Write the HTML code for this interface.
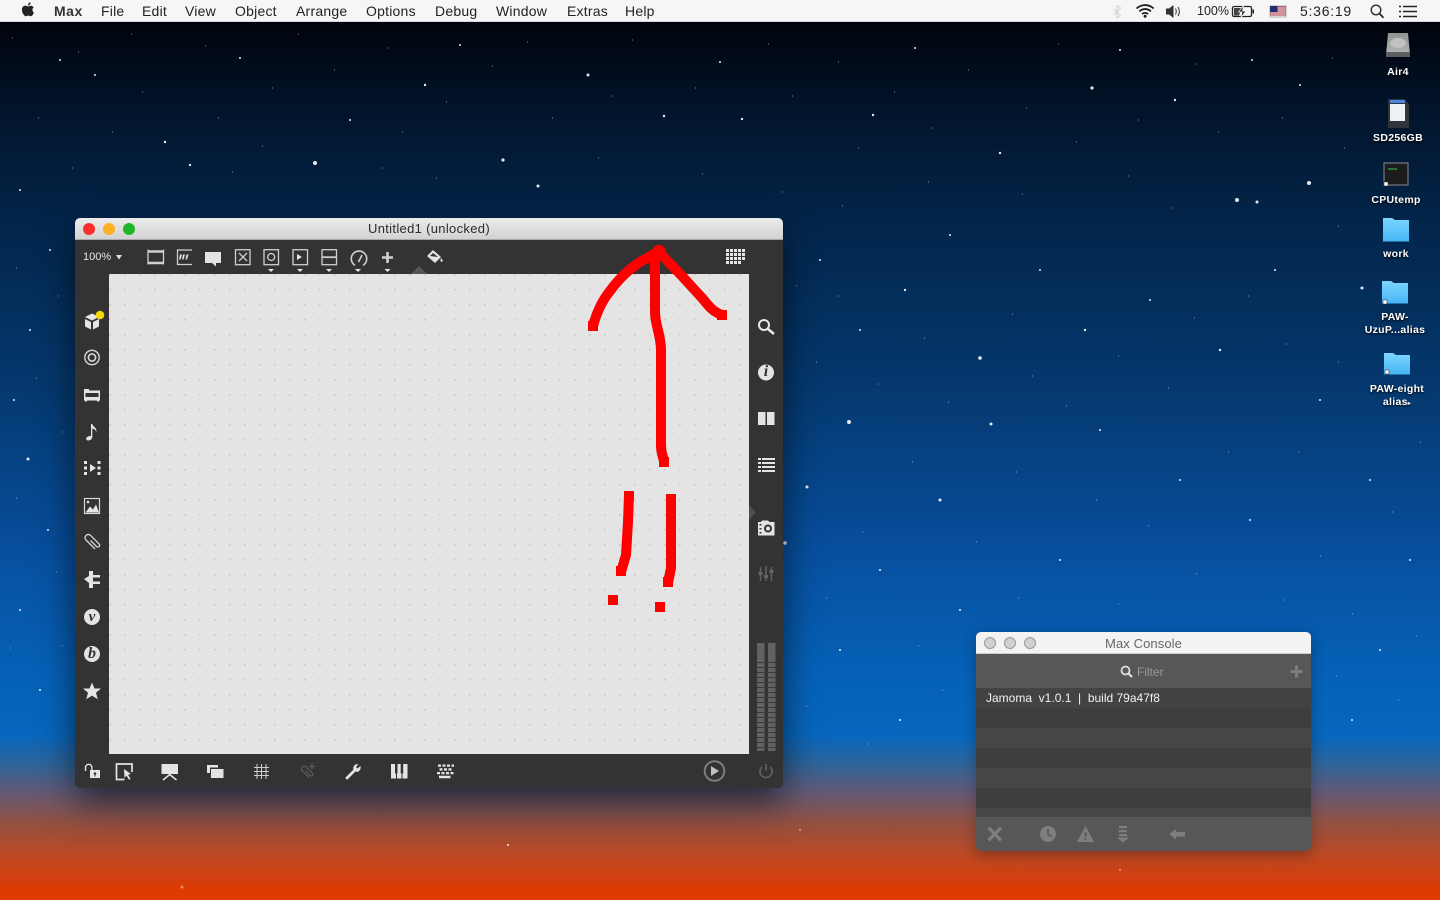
<!DOCTYPE html>
<html>
<head>
<meta charset="utf-8">
<title>Max</title>
<style>
html,body{margin:0;padding:0;width:1440px;height:900px;overflow:hidden}
body{position:relative;font-family:"Liberation Sans",sans-serif;background:linear-gradient(180deg,#01040c 22px,#021228 100px,#03254a 220px,#053a72 400px,#0750a0 560px,#0662b8 680px,#0766bd 735px,#2f6498 765px,#5f5a78 790px,#96503f 825px,#c34720 860px,#de3a02 892px,#de3a02 900px)}
div{position:absolute;box-sizing:border-box}
svg{position:absolute;left:0;top:0}
.m{top:3px;font-size:14px;line-height:16px;color:#222;white-space:nowrap;letter-spacing:.22px}
.d{color:#fff;font-weight:bold;font-size:10.5px;line-height:13px;text-align:center;width:80px;letter-spacing:.3px;text-shadow:0 1px 2px #000}
</style>
</head>
<body>
<svg width="1440" height="900" fill="#fff">
<g opacity=".9">
<circle cx="315" cy="163" r="2"/><circle cx="503" cy="160" r="1.600"/><circle cx="538" cy="186" r="1.500"/><circle cx="1092" cy="88" r="1.600"/><circle cx="1309" cy="183" r="2"/><circle cx="1237" cy="200" r="2"/><circle cx="1257" cy="202" r="1.500"/><circle cx="1362" cy="288" r="1.500"/><circle cx="980" cy="358" r="1.800"/><circle cx="849" cy="422" r="2"/><circle cx="991" cy="424" r="1.500"/><circle cx="807" cy="487" r="1.500"/><circle cx="940" cy="500" r="1.500"/><circle cx="785" cy="543" r="1.800"/><circle cx="28" cy="459" r="1.500"/><circle cx="190" cy="165" r="1.200"/><circle cx="165" cy="142" r="1.200"/><circle cx="350" cy="120" r="1"/><circle cx="425" cy="85" r="1.200"/><circle cx="588" cy="75" r="1.500"/><circle cx="664" cy="116" r="1.200"/><circle cx="742" cy="119" r="1.200"/><circle cx="873" cy="115" r="1.200"/><circle cx="1000" cy="153" r="1.200"/><circle cx="1175" cy="100" r="1.200"/><circle cx="1300" cy="85" r="1"/><circle cx="95" cy="75" r="1"/><circle cx="60" cy="60" r="1"/><circle cx="240" cy="58" r="1"/><circle cx="460" cy="45" r="1"/><circle cx="720" cy="62" r="1"/><circle cx="915" cy="48" r="1"/><circle cx="1120" cy="50" r="1"/><circle cx="1252" cy="60" r="1"/><circle cx="20" cy="190" r="1"/><circle cx="50" cy="250" r="1"/><circle cx="30" cy="330" r="1"/><circle cx="14" cy="400" r="1"/><circle cx="48" cy="530" r="1"/><circle cx="20" cy="610" r="1"/><circle cx="40" cy="690" r="1"/><circle cx="820" cy="260" r="1"/><circle cx="860" cy="330" r="1"/><circle cx="905" cy="290" r="1.200"/><circle cx="950" cy="235" r="1"/><circle cx="1040" cy="270" r="1"/><circle cx="1085" cy="330" r="1.200"/><circle cx="1150" cy="300" r="1"/><circle cx="1220" cy="350" r="1.200"/><circle cx="1275" cy="270" r="1"/><circle cx="1320" cy="400" r="1"/><circle cx="1100" cy="430" r="1"/><circle cx="1180" cy="480" r="1"/><circle cx="1250" cy="520" r="1"/><circle cx="1370" cy="480" r="1"/><circle cx="1410" cy="560" r="1"/><circle cx="880" cy="570" r="1"/><circle cx="960" cy="610" r="1"/><circle cx="1060" cy="560" r="1"/><circle cx="840" cy="650" r="1"/><circle cx="1380" cy="650" r="1"/><circle cx="900" cy="720" r="1"/><circle cx="1352" cy="720" r="1"/><circle cx="508" cy="845" r="1"/><circle cx="182" cy="887" r="1.500" fill="#f09070"/><circle cx="1120" cy="870" r="1" opacity=".5"/><circle cx="800" cy="830" r="1" opacity=".5"/>
</g>
<path opacity=".5" stroke="#fff" stroke-width="1" fill="none" d="M12 38h1M78 52h1M131 34h1M142 92h1M205 46h1M218 118h1M272 88h1M298 34h1M334 70h1M388 48h1M402 132h1M446 102h1M492 66h1M527 42h1M552 118h1M612 96h1M632 40h1M695 88h1M768 44h1M792 96h1M838 62h1M858 148h1M894 92h1M932 128h1M968 70h1M1026 108h1M1058 44h1M1076 142h1M1138 120h1M1196 64h1M1218 132h1M1282 118h1M1332 58h1M1344 148h1M38 118h1M72 168h1M112 132h1M232 172h1M262 146h1M382 168h1M436 178h1M598 158h1M702 174h1M782 192h1M842 206h1M928 182h1M1022 194h1M1128 176h1M1172 208h1M1338 226h1M16 268h1M58 296h1M36 378h1M62 432h1M16 498h1M56 572h1M10 648h1M62 646h1M796 286h1M838 296h1M816 362h1M878 384h1M924 338h1M948 402h1M1012 314h1M1032 376h1M1066 406h1M1118 356h1M1168 388h1M1194 318h1M1248 296h1M1286 344h1M1298 452h1M1338 362h1M1420 442h1M1392 512h1M1320 556h1M1228 452h1M1148 526h1M1096 500h1M1016 472h1M976 542h1M912 462h1M862 532h1M826 598h1M918 646h1M1018 598h1M1118 604h1M1196 574h1M1284 600h1M1352 614h1M1416 636h1M806 706h1M868 744h1M942 690h1M1336 676h1M1398 700h1"/>
</svg>

<!-- Menu bar -->
<div style="left:0;top:0;width:1440px;height:22px;background:#f6f6f6;border-bottom:1px solid #d8d8d8"></div>
<svg width="1440" height="22" style="z-index:2">
<path d="M31 5.600c-1.200 0-1.700.7-2.800.7-1 0-1.700-.7-2.800-.7-1.800 0-3.500 1.400-3.500 4 0 3 2.200 6.600 3.900 6.600.9 0 1.300-.6 2.500-.6s1.500.6 2.500.6c1.300 0 2.500-2 3.200-3.700-1.600-.7-2.400-3.500-.4-5-.7-1.200-1.800-1.900-2.600-1.900zM28.100 5.400c1.500 0 2.600-1.500 2.400-3-1.300.1-2.700 1.300-2.400 3z" fill="#222"/>
<path d="M1117 5l3.500 3-3.500 3.600V18M1117 5v13l3.500-3-7-5.600M1117 12l-3.500 3" fill="none" stroke="#d0d0d0" stroke-width="1"/>
<g fill="none" stroke="#1e1e1e" stroke-width="1.800"><path d="M1136.500 8.500c5.200-4.600 12-4.600 17.200 0"/><path d="M1139.300 11.300c3.500-3 8.100-3 11.600 0"/><path d="M1142 14c1.800-1.500 4.400-1.500 6.200 0"/></g><circle cx="1145.100" cy="16.300" r="1.500" fill="#1e1e1e"/>
<path d="M1166 8.500h3l4.500-3.500v13L1169 14.500h-3z" fill="#333"/><path d="M1175.500 8.500c1 1.700 1 4.300 0 6M1178 7c1.700 2.800 1.700 6.200 0 9" fill="none" stroke="#333" stroke-width="1"/>
<rect x="1232.500" y="6.500" width="19" height="10" rx="1.500" fill="none" stroke="#222" stroke-width="1.300"/><rect x="1252.500" y="9.500" width="1.500" height="4" fill="#222"/><path d="M1234 8h8l-3 7.500h-5z" fill="#444"/><path d="M1243.500 5.500l-5 6.500h3.500l-1 5.500 5-6.500h-3.500z" fill="#222" stroke="#f6f6f6" stroke-width=".7"/>
<rect x="1270" y="6" width="16" height="11" fill="#fff" stroke="#666" stroke-width=".5"/><path d="M1270 7h16M1270 9h16M1270 11h16M1270 13h16M1270 15h16" stroke="#a62633" stroke-width="1"/><rect x="1270" y="6" width="7.500" height="6" fill="#1f2c70"/>
<circle cx="1376" cy="10" r="4.800" fill="none" stroke="#2a2a2a" stroke-width="1.400"/><path d="M1379.500 13.500l4 4.200" stroke="#2a2a2a" stroke-width="1.800"/>
<path d="M1403 6.500h14M1403 11.500h14M1403 16.500h14" stroke="#222" stroke-width="1.400"/><path d="M1399 6.500h2M1399 11.500h2M1399 16.500h2" stroke="#222" stroke-width="1.600"/>
</svg>
<div class="m" style="left:54px;font-weight:bold;color:#333;letter-spacing:.5px">Max</div>
<div class="m" style="left:101px">File</div>
<div class="m" style="left:142px">Edit</div>
<div class="m" style="left:185px">View</div>
<div class="m" style="left:235px">Object</div>
<div class="m" style="left:296px">Arrange</div>
<div class="m" style="left:366px">Options</div>
<div class="m" style="left:435px">Debug</div>
<div class="m" style="left:496px">Window</div>
<div class="m" style="left:567px">Extras</div>
<div class="m" style="left:625px">Help</div>
<div class="m" style="left:1197px;font-size:12.500px;top:3px;letter-spacing:0">100%</div>
<div class="m" style="left:1300px;letter-spacing:.75px">5:36:19</div>

<!-- Desktop icons -->
<svg width="1440" height="420">
<defs><linearGradient id="fo" x1="0" y1="0" x2="0" y2="1"><stop offset="0" stop-color="#7cd5ff"/><stop offset="1" stop-color="#46b6f4"/></linearGradient><linearGradient id="hd" x1="0" y1="0" x2="0" y2="1"><stop offset="0" stop-color="#8f9392"/><stop offset="1" stop-color="#b4b7b6"/></linearGradient></defs>
<path d="M1388 33h20l2 22h-24z" fill="url(#hd)"/><rect x="1386" y="52" width="24" height="5" fill="#5a5e60"/><ellipse cx="1398" cy="43" rx="8" ry="5" fill="#bfc2c1"/>
<path d="M1388 99h16l5 5v24h-21z" fill="#30353b"/><rect x="1390" y="100" width="15" height="3" fill="#4a88e0"/><rect x="1390" y="104" width="15" height="17" fill="#eef1f4"/>
<rect x="1384" y="163" width="24" height="22" fill="#1c1c1c" stroke="#8a8d90"/><path d="M1388 169h9" stroke="#3cc45a" stroke-width="1"/>
<path d="M1383 224v-6h9l3 2h14v21.500h-26z" fill="url(#fo)"/>
<path d="M1382 288v-7h9l3 2h14v20.500h-26z" fill="url(#fo)"/>
<path d="M1384 360v-7h9l3 2h14v19.500h-26z" fill="url(#fo)"/>
<g fill="#fff" stroke="#222" stroke-width=".5"><rect x="1384" y="182" width="4" height="4"/><rect x="1383" y="300" width="4" height="4"/><rect x="1385" y="370" width="4" height="4"/></g>
</svg>
<div class="d" style="left:1358px;top:66px">Air4</div>
<div class="d" style="left:1358px;top:132px">SD256GB</div>
<div class="d" style="left:1356px;top:194px">CPUtemp</div>
<div class="d" style="left:1356px;top:248px">work</div>
<div class="d" style="left:1355px;top:311px">PAW-<br>UzuP...alias</div>
<div class="d" style="left:1357px;top:383px">PAW-eight<br>alias<span style="font-size:6px">▸</span></div>

<!-- Main window -->
<div style="left:75px;top:218px;width:708px;height:570px;background:#333;border-radius:5px;box-shadow:0 14px 36px rgba(0,0,0,.6);overflow:hidden">
<div style="left:0;top:0;width:708px;height:22px;background:linear-gradient(#ececec,#d2d2d2);border-bottom:1px solid #a8a8a8;font-size:13px;line-height:22px;text-align:center;color:#2c2c2c;letter-spacing:.32px">Untitled1 (unlocked)</div>
<div style="left:8px;top:32px;color:#e6e6e6;font-size:11px;line-height:14px">100%</div>
</div>
<div style="left:109px;top:274px;width:640px;height:480px;background-color:#e4e4e4;background-image:radial-gradient(circle at .75px .75px,#c6c6c6 .8px,transparent 1.100px);background-size:15px 15px;background-position:0 0"></div>

<svg width="1440" height="900" fill="#e4e4e4" stroke="none" style="filter:blur(.25px)">
<!-- traffic lights -->
<circle cx="89" cy="229" r="6" fill="#fc2e2e"/><circle cx="109" cy="229" r="6" fill="#fdb022"/><circle cx="129" cy="229" r="6" fill="#1fb52a"/>
<!-- top toolbar -->
<path d="M116 255h6l-3 4.500z"/>
<g fill="none" stroke="#d0d0d0" stroke-width="1.300">
<path d="M148 249.500v15M163.500 249.500v15"/><path d="M148 251.500h15.500M148 263h15.500" stroke-width="2.600"/>
<path d="M192 250h-14.500v14.500H192"/>
<rect x="235.500" y="249.700" width="14.500" height="15"/><path d="M239 253l8 8M247 253l-8 8"/>
<rect x="264" y="249.700" width="14.500" height="15"/><circle cx="271.200" cy="257" r="3.500"/>
<rect x="293" y="249.700" width="14.500" height="15"/>
<rect x="322" y="249.700" width="14.500" height="15"/><path d="M322 257.200h14.500" stroke-width="1.800"/>
<path d="M355 265.300a7.700 7.700 0 1 1 8 0" stroke-width="1.600"/><path d="M358.500 262l3.500-7" stroke-width="1.600"/>
<path d="M387.500 252v11M382 257.500h11" stroke-width="2.600"/>
</g>
<path d="M183 254.500h2l-1.500 5h-1.500zM186.500 254.500h2l-1.500 5h-1.500zM180 254.500h2l-1.500 5H179z"/>
<path d="M205 252h16v11h-5v3.500l-4-3.500h-7z"/>
<path d="M297 254l5 3-5 3z"/>
<path d="M268 269h6l-3 3zM297 269h6l-3 3zM326 269h6l-3 3zM355 269h6l-3 3zM384.500 269h6l-3 3z"/>
<path d="M433 250l8 7-6 6-8-7zM441 258c1.500 1.500 2.200 3 1 4-1.500 0-2-1.500-1-4z"/><path d="M430 256l3-3 5 4z" fill="#333"/>
<path d="M411 274l8-8 8 8z" fill="#555"/>
<path d="M726 249h3v3h-3zM730 249h3v3h-3zM734 249h3v3h-3zM738 249h3v3h-3zM742 249h3v3h-3zM726 253h3v3h-3zM730 253h3v3h-3zM734 253h3v3h-3zM738 253h3v3h-3zM742 253h3v3h-3zM726 257h3v3h-3zM730 257h3v3h-3zM734 257h3v3h-3zM738 257h3v3h-3zM742 257h3v3h-3zM726 261h3v3h-3zM730 261h3v3h-3zM734 261h3v3h-3zM738 261h3v3h-3z"/>

<!-- left toolbar -->
<path d="M85 317l7-3.500 7 3.500-7 3.500zM85 319l6 3v7.500l-6-3zM99 319l-6 3v7.500l6-3z"/><circle cx="100" cy="315" r="4.300" fill="#f5d90a"/>
<circle cx="92" cy="357.500" r="7.200" fill="none" stroke="#d6d6d6" stroke-width="1.400"/><circle cx="92" cy="357.500" r="3.600" fill="none" stroke="#d6d6d6" stroke-width="1.600"/>
<path d="M84 389h5v1.500h11v10h-1v1h-2v-1H87v1h-2v-1h-1z"/><rect x="85.500" y="393" width="13" height="4" fill="#333"/>
<path d="M91 424h1.300c.5 3 5 3.500 4 8-.8-2.200-2-3-4-3.500V437c0 2-2 3.500-4 3.500s-2.500-1.500-2-2.500c.7-1.500 3-2.500 4.700-1.800z"/>
<path d="M84 461h3v3h-3zM84 466.500h3v3h-3zM84 472h3v3h-3zM97.500 461h3v3h-3zM97.500 466.500h3v3h-3zM97.500 472h3v3h-3zM90 464l6 4-6 4z"/>
<rect x="84.500" y="498.500" width="15" height="15" fill="none" stroke="#d6d6d6" stroke-width="1.200"/><path d="M85.500 512.500l4.500-6 3 3 3-5 3 8z"/><circle cx="88" cy="502" r="1.300"/>
<path d="M91 541.500l6 6a1.800 1.800 0 0 0 2.600-2.600l-8.500-8.500a3.200 3.200 0 0 0-4.600 4.600l9 9" fill="none" stroke="#d6d6d6" stroke-width="1.300" transform="translate(-.5 -1)"/>
<path d="M84 579l5-3v-5h4v4h7v2.500h-7v4h7v2.500h-7v4h-4v-5z"/>
<circle cx="92" cy="617" r="8"/><circle cx="92" cy="654" r="8"/>
<path d="M92 682.500l2.500 6h6.500l-5 4.200 1.800 6.600-5.800-3.700-5.800 3.700 1.800-6.600-5-4.200h6.500z"/>

<!-- right toolbar -->
<circle cx="764" cy="325" r="5" fill="none" stroke="#e8e8e8" stroke-width="2"/><path d="M768 329l6 5" stroke="#e8e8e8" stroke-width="2.600"/>
<circle cx="766" cy="372.500" r="8"/>
<path d="M758 412h7.500v13H758zM767 412h7.500v13H767z"/>
<path d="M758 458h3v2h-3zM762 458h13v2h-13zM758 462h3v2h-3zM762 462h13v2h-13zM758 466h3v2h-3zM762 466h13v2h-13zM758 470h3v2h-3zM762 470h13v2h-13z"/>
<path d="M758 522h3l1-1.500h6l1.500 1.500h5v13.500h-16.500z"/><circle cx="768" cy="528.500" r="4" fill="#333"/><circle cx="768" cy="528.500" r="2" fill="#e4e4e4"/><path d="M759.500 524h2v1.500h-2zM759.500 528h2v1.500h-2zM759.500 532h2v1.500h-2z" fill="#333"/>
<g stroke="#646464" stroke-width="1.400"><path d="M760.500 567v14M766 566v15M771.500 567v14"/></g><path d="M758.500 572h4v3h-4zM764 575h4v3h-4zM769.500 570h4v3h-4z" fill="#646464"/>
<path d="M749 505l7 7.500-7 7.500z" fill="#4e4e4e"/>
<rect x="757" y="643" width="7.500" height="108" fill="#626262"/><rect x="768" y="643" width="7.500" height="108" fill="#626262"/>
<path d="M757 662.500h19M757 667.500h19M757 672.500h19M757 677.500h19M757 682.500h19M757 687.500h19M757 692.500h19M757 697.500h19M757 702.500h19M757 707.500h19M757 712.500h19M757 717.500h19M757 722.500h19M757 727.500h19M757 732.500h19M757 737.500h19M757 742.500h19M757 747.500h19" stroke="#3a3a3a" stroke-width="1"/>
<path d="M766 764v7" stroke="#5e5e5e" stroke-width="1.800"/><path d="M762 767a6 6 0 1 0 8 0" fill="none" stroke="#5e5e5e" stroke-width="1.800"/>

<!-- bottom toolbar -->
<path d="M85.500 771v-3.500a3.200 3.200 0 0 1 6.400 0v3" fill="none" stroke="#e4e4e4" stroke-width="1.400"/><rect x="90" y="770" width="10" height="8"/><circle cx="95" cy="773.500" r="1.300" fill="#333"/><rect x="94.500" y="774" width="1" height="2.500" fill="#333"/>
<path d="M132 772v-8h-15.500v15.500h8" fill="none" stroke="#e4e4e4" stroke-width="1.700"/><path d="M124 769l7 5-3 .8 2.500 4-1.500 1-2.500-4-2 2z"/>
<path d="M161.500 764h16.500v10h-16.500z"/><path d="M163 780l6.700-5.500 6.800 5.500" fill="none" stroke="#e4e4e4" stroke-width="1.600"/>
<path d="M207 765h11v2.500h-8V773h-3z"/><rect x="211" y="769" width="12.500" height="9"/>
<path d="M257 764v15M261.500 764v15M266 764v15M254 767.500h15M254 771.500h15M254 775.500h15" fill="none" stroke="#d0d0d0" stroke-width="1"/>
<path d="M305 770.500l5 5a1.600 1.600 0 0 0 2.300-2.300l-6.500-6.500a2.700 2.700 0 0 0-3.800 3.800l7 7" fill="none" stroke="#5e5e5e" stroke-width="1.200"/><path d="M312 763.500v6M309 766.500h6" stroke="#5e5e5e" stroke-width="1.200"/>
<path d="M347 778l7-7" stroke="#e4e4e4" stroke-width="2.800" stroke-linecap="round"/><path d="M354 771a4.500 4.500 0 0 1 1.500-6.500l3-.5-2.500 3 1.500 1.500 3-2.500c.5 2.500-.5 5-3 6z"/>
<rect x="391" y="764" width="16.500" height="14.500"/><path d="M396.500 773.500V778.500M402 773.500V778.500" stroke="#333" stroke-width="1"/><path d="M395 764h2.500v9.500H395zM400.700 764h2.500v9.500h-2.500z" fill="#333"/>
<path d="M438 764.500h3v2.300h-3zM442.500 764.500h3v2.300h-3zM447 764.500h3v2.300h-3zM451.500 764.500h2.500v2.300h-2.500zM439.500 768.300h3v2.300h-3zM444 768.300h3v2.300h-3zM448.500 768.300h3v2.300h-3zM437 772h3v2.300h-3zM441.500 772h3v2.300h-3zM446 772h3v2.300h-3zM450.500 772h3v2.300h-3zM439 775.700h11.500v2.500H439z"/>
<circle cx="714.500" cy="771" r="9.800" fill="none" stroke="#7e7e7e" stroke-width="2"/><path d="M711 766l8 5-8 5z" fill="#bfbfbf"/>
</svg>
<div style="left:85px;top:608px;width:14px;text-align:center;font:italic bold 15px/18px 'Liberation Serif',serif;color:#333">v</div>
<div style="left:85px;top:645px;width:14px;text-align:center;font:italic bold 16px/18px 'Liberation Serif',serif;color:#333">b</div>
<div style="left:759px;top:363px;width:14px;text-align:center;font:italic bold 16px/18px 'Liberation Serif',serif;color:#333">i</div>

<!-- Red arrow -->
<svg width="1440" height="900" fill="none" stroke="#fe0000" stroke-width="10" stroke-linejoin="round">
<path d="M655 250V312C655 325 661 335 661 350V445C661 455 664 458 664 462"/>
<path d="M593 326C596 315 601 302 610 291C618 280 628 270 640 262L658 252"/>
<path d="M657 250L681 275L703 299C710 308 714 312 722 315"/>
<path d="M629 495L628 522L626 555L621 572"/>
<path d="M671 498V568L668 583"/>
<g fill="#fe0000" stroke="none">
<rect x="588" y="321" width="10" height="10"/><rect x="717" y="310" width="10" height="10"/><rect x="659" y="457" width="10" height="10"/>
<rect x="624" y="491" width="10" height="9"/><rect x="616" y="566" width="10" height="10"/><rect x="666" y="494" width="10" height="9"/><rect x="663" y="577" width="10" height="10"/>
<rect x="608" y="595" width="10" height="10"/><rect x="655" y="602" width="10" height="10"/>
<circle cx="659" cy="252" r="7"/>
</g>
</svg>

<!-- Max Console -->
<div style="left:976px;top:632px;width:335px;height:219px;background:#454545;border-radius:5px;box-shadow:0 4px 14px rgba(0,0,0,.3);overflow:hidden">
<div style="left:0;top:0;width:335px;height:22px;background:#f3f3f3;border-bottom:1px solid #cfcfcf;font-size:13px;line-height:23px;text-align:center;color:#666;letter-spacing:.1px">Max Console</div>
<div style="left:0;top:22px;width:335px;height:34px;background:#575757"></div>
<div style="left:0;top:56px;width:335px;height:20px;background:#434343"></div>
<div style="left:0;top:76px;width:335px;height:20px;background:#3e3e3e"></div>
<div style="left:0;top:96px;width:335px;height:20px;background:#464646"></div>
<div style="left:0;top:116px;width:335px;height:20px;background:#3e3e3e"></div>
<div style="left:0;top:136px;width:335px;height:20px;background:#464646"></div>
<div style="left:0;top:156px;width:335px;height:20px;background:#3e3e3e"></div>
<div style="left:0;top:176px;width:335px;height:10px;background:#464646"></div>
<div style="left:0;top:185px;width:335px;height:34px;background:#575757"></div>
<div style="left:10px;top:59px;font-size:12px;line-height:14px;color:#f2f2f2;white-space:pre">Jamoma  v1.0.1  |  build 79a47f8</div>
<div style="left:161px;top:33px;font-size:12px;line-height:14px;color:#9a9a9a">Filter</div>
</div>
<svg width="1440" height="900">
<circle cx="990" cy="643" r="5.500" fill="#d0d0d0" stroke="#9a9a9a"/><circle cx="1010" cy="643" r="5.500" fill="#d0d0d0" stroke="#9a9a9a"/><circle cx="1030" cy="643" r="5.500" fill="#d0d0d0" stroke="#9a9a9a"/>
<circle cx="1125.500" cy="670.500" r="4" fill="none" stroke="#dedede" stroke-width="1.800"/><path d="M1128.500 673.500l3.500 3.500" stroke="#dedede" stroke-width="2.200"/>
<path d="M1296.500 665.500v12M1290.500 671.500h12" stroke="#7c7c7c" stroke-width="3"/>
<path d="M988.500 827.500l12.500 13M1001 827.500l-12.500 13" stroke="#7e7e7e" stroke-width="3.200"/>
<circle cx="1048" cy="834" r="8" fill="#7e7e7e"/><path d="M1048 829v5.500l4 2" fill="none" stroke="#575757" stroke-width="1.500"/>
<path d="M1085.500 826l8.500 16h-17z" fill="#7e7e7e"/><rect x="1084.700" y="832" width="1.800" height="5" fill="#575757"/><rect x="1084.700" y="838" width="1.800" height="1.800" fill="#575757"/>
<path d="M1119 826h8v2.200h-8zM1119 830h8v2.200h-8zM1119 834h8v2.200h-8zM1117 837.500h12l-6 5z" fill="#7e7e7e"/>
<path d="M1169 834l7-5v3h9v4.500h-9v3z" fill="#7e7e7e"/>
</svg>
</body>
</html>
